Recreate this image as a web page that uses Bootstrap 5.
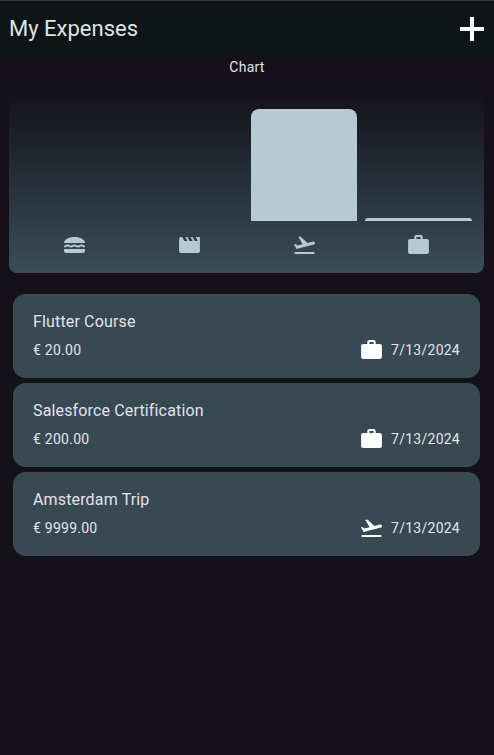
<!DOCTYPE html>
<html lang="en" data-bs-theme="dark">
<head>
<meta charset="utf-8">
<meta name="viewport" content="width=device-width, initial-scale=1">
<title>My Expenses</title>
<link href="https://cdn.jsdelivr.net/npm/bootstrap@5.3.0/dist/css/bootstrap.min.css" rel="stylesheet">
<style>
  body { background: #141218; color: #e6e0e9; font-family: Roboto, "Liberation Sans", sans-serif; font-size: 14px; line-height: 20px; letter-spacing: .25px; font-variant-ligatures: none; overflow: hidden; }
  .app-bar { height: 57px; background: #0f1416; border-top: 1px solid #373a37; padding: 0 10px 0 9px; }
  .app-title { font-size: 22px; line-height: 28px; letter-spacing: 0; font-weight: 400; color: #dee3e5; }
  .add-btn { line-height: 0; color: #fff; }
  .chart-title { height: 20px; }
  .chart-panel { height: 181px; margin: 15px 10px 0 9px; padding: 17px 8px 0; border-radius: 0 0 8px 8px; background: linear-gradient(to top, #394d5a, rgba(57,77,90,0)); }
  .chart-bars { height: 112px; }
  .chart-col { padding: 0 4px; }
  .chart-bar { background: #b5cad5; border-radius: 8px 8px 0 0; }
  .chart-icons { color: #b5cad5; margin-top: 12px; }
  .chart-icons svg, .expense svg { width: 25px; height: 24px; fill: currentColor; display: block; }
  .chart-icons svg { margin-left: .6px; }
  .expenses { margin: 21px 14px 0 13px; gap: 5px; }
  .expense { height: 84px; border-radius: 12.5px; background: #374a52; padding: 16px 20px 0; }
  .expense-title { font-size: 16px; line-height: 24px; letter-spacing: .15px; font-weight: 400; color: #e6e0e9; }
  .expense-row { height: 24px; margin-top: 4px; }
  .expense-row svg { color: #fff; margin-right: 7px; }
</style>
<script src="https://cdn.jsdelivr.net/npm/bootstrap@5.3.0/dist/js/bootstrap.bundle.min.js"></script>
</head>
<body>
<svg class="d-none" aria-hidden="true">
  <symbol id="work" viewBox="0 0 24 24" preserveAspectRatio="none"><path d="M20 6h-4V4c0-1.11-.89-2-2-2h-4c-1.11 0-2 .89-2 2v2H4c-1.11 0-1.99.89-1.99 2L2 19c0 1.11.89 2 2 2h16c1.11 0 2-.89 2-2V8c0-1.11-.89-2-2-2zm-6 0h-4V4h4v2z"/></symbol>
  <symbol id="travel" viewBox="0 0 24 24" preserveAspectRatio="none"><path d="M2.5 19h19v2h-19v-2zm19.57-9.36c-.21-.8-1.04-1.28-1.84-1.06L14.92 10l-6.9-6.43-1.93.51 4.14 7.17-4.97 1.33-1.97-1.54-1.45.39 1.82 3.16.77 1.33 1.6-.43 5.31-1.42 4.35-1.16L21 11.49c.81-.23 1.28-1.05 1.07-1.85z"/></symbol>
  <symbol id="leisure" viewBox="0 0 24 24" preserveAspectRatio="none"><path d="M18 4l2 4h-3l-2-4h-2l2 4h-3l-2-4H8l2 4H7L5 4H4c-1.1 0-1.99.9-1.99 2L2 18c0 1.1.9 2 2 2h16c1.1 0 2-.9 2-2V4h-4z"/></symbol>
  <symbol id="food" viewBox="0 0 24 24" preserveAspectRatio="none"><path d="M22 10c.32-3.28-4.28-6-9.99-6S1.7 6.72 2.02 10H22z"/><path d="M5.35 13.5c.55 0 .78.14 1.15.36.45.27 1.07.64 2.18.64s1.73-.37 2.18-.64c.37-.23.59-.36 1.15-.36.55 0 .78.14 1.15.36.45.27 1.07.64 2.18.64 1.11 0 1.73-.37 2.18-.64.37-.23.59-.36 1.15-.36.55 0 .78.14 1.15.36.45.27 1.07.63 2.17.64v-1.98s-.79-.16-1.16-.38c-.45-.27-1.07-.64-2.18-.64-1.11 0-1.73.37-2.18.64-.37.23-.6.36-1.15.36s-.78-.14-1.15-.36c-.45-.27-1.07-.64-2.18-.64s-1.73.37-2.18.64c-.37.23-.59.36-1.15.36-.55 0-.78-.14-1.15-.36-.45-.27-1.07-.64-2.18-.64-1.11 0-1.73.37-2.18.64-.37.23-.59.36-1.15.36v2c1.11 0 1.73-.37 2.21-.64.37-.23.59-.36 1.14-.36z"/><path d="M2 16v2c0 1.1.9 2 2 2h16c1.1 0 2-.9 2-2v-2H2z"/></symbol>
</svg>

<header class="app-bar d-flex align-items-center justify-content-between">
  <h1 class="app-title mb-0">My Expenses</h1>
  <button type="button" class="add-btn btn p-0 border-0" aria-label="Add expense">
    <svg width="24" height="24" viewBox="0 0 24 24" fill="currentColor"><path d="M10 0h4v10h10v4H14v10h-4V14H0v-4h10z"/></svg>
  </button>
</header>

<main>
  <div class="chart-title text-center">Chart</div>
  <section class="chart-panel">
    <div class="chart-bars d-flex align-items-end">
      <div class="chart-col col-3 h-100"></div>
      <div class="chart-col col-3 h-100"></div>
      <div class="chart-col col-3 h-100 d-flex align-items-end"><div class="chart-bar w-100" style="height:100%"></div></div>
      <div class="chart-col col-3 h-100 d-flex align-items-end"><div class="chart-bar w-100" style="height:2.5%"></div></div>
    </div>
    <div class="chart-icons d-flex">
      <div class="col-3 d-flex justify-content-center"><svg><use href="#food"/></svg></div>
      <div class="col-3 d-flex justify-content-center"><svg><use href="#leisure"/></svg></div>
      <div class="col-3 d-flex justify-content-center"><svg><use href="#travel"/></svg></div>
      <div class="col-3 d-flex justify-content-center"><svg><use href="#work"/></svg></div>
    </div>
  </section>

  <section class="expenses d-flex flex-column">
    <article class="expense">
      <h2 class="expense-title mb-0">Flutter Course</h2>
      <div class="expense-row d-flex align-items-center"><span class="me-auto">€ 20.00</span><svg><use href="#work"/></svg><span>7/13/2024</span></div>
    </article>
    <article class="expense">
      <h2 class="expense-title mb-0">Salesforce Certification</h2>
      <div class="expense-row d-flex align-items-center"><span class="me-auto">€ 200.00</span><svg><use href="#work"/></svg><span>7/13/2024</span></div>
    </article>
    <article class="expense">
      <h2 class="expense-title mb-0">Amsterdam Trip</h2>
      <div class="expense-row d-flex align-items-center"><span class="me-auto">€ 9999.00</span><svg><use href="#travel"/></svg><span>7/13/2024</span></div>
    </article>
  </section>
</main>
</body>
</html>
